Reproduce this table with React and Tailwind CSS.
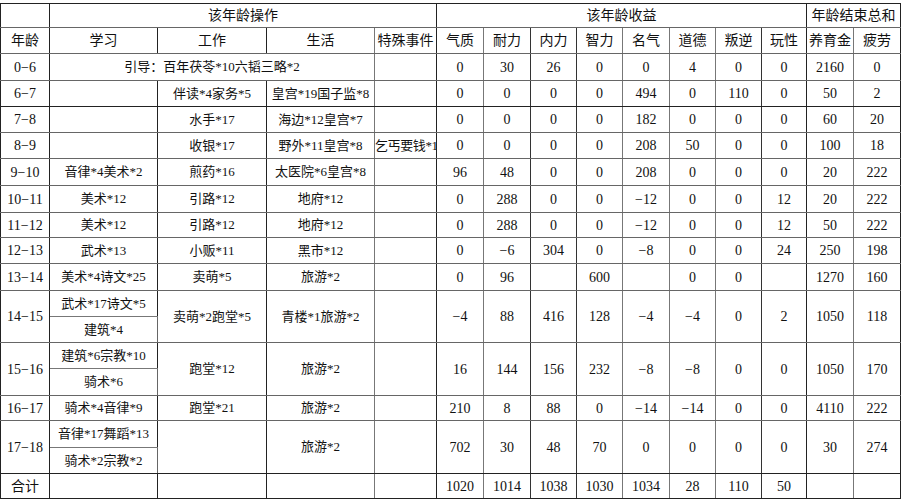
import clsx from 'clsx';

// right-hand line colour of each column (the left cell wins in a collapsed table)
const RIGHT = [
    'border-r-[#222]', 'border-r-[#222]', 'border-r-[#222]', 'border-r-[#777]', 'border-r-[#222]',
    'border-r-[#777]', 'border-r-[#333]', 'border-r-[#333]', 'border-r-[#777]', 'border-r-[#777]',
    'border-r-[#777]', 'border-r-[#333]', 'border-r-[#222]', 'border-r-[#777]', 'border-r-[#222]'
];

const widths = ['w-[49px]', 'w-[108px]', 'w-[109px]', 'w-[108px]', 'w-[62px]', 'w-[47px]', 'w-[47px]', 'w-[46px]', 'w-[46px]', 'w-[47px]', 'w-[46px]', 'w-[46px]', 'w-[45px]', 'w-[47px]', 'w-[47px]'];

const gainLabels = ['气质', '耐力', '内力', '智力', '名气', '道德', '叛逆', '玩性'];

const rows = [
    { age: '0−6', guide: '引导：百年茯苓*10六韬三略*2', nums: [0, 30, 26, 0, 0, 4, 0, 0, 2160, 0], h: 'h-[27px]' },
    { age: '6−7', study: '', work: '伴读*4家务*5', life: '皇宫*19国子监*8', nums: [0, 0, 0, 0, 494, 0, 110, 0, 50, 2], h: 'h-[26px]', dark: true },
    { age: '7−8', study: '', work: '水手*17', life: '海边*12皇宫*7', nums: [0, 0, 0, 0, 182, 0, 0, 0, 60, 20], h: 'h-[26px]' },
    { age: '8−9', study: '', work: '收银*17', life: '野外*11皇宫*8', special: '乞丐要钱*1', nums: [0, 0, 0, 0, 208, 50, 0, 0, 100, 18], h: 'h-[26px]' },
    { age: '9−10', study: '音律*4美术*2', work: '煎药*16', life: '太医院*6皇宫*8', nums: [96, 48, 0, 0, 208, 0, 0, 0, 20, 222], h: 'h-[27px]' },
    { age: '10−11', study: '美术*12', work: '引路*12', life: '地府*12', nums: [0, 288, 0, 0, '−12', 0, 0, 12, 20, 222], h: 'h-[27px]' },
    { age: '11−12', study: '美术*12', work: '引路*12', life: '地府*12', nums: [0, 288, 0, 0, '−12', 0, 0, 12, 50, 222], h: 'h-[25px]' },
    { age: '12−13', study: '武术*13', work: '小贩*11', life: '黑市*12', nums: [0, '−6', 304, 0, '−8', 0, 0, 24, 250, 198], h: 'h-[26px]' },
    { age: '13−14', study: '美术*4诗文*25', work: '卖萌*5', life: '旅游*2', nums: [0, 96, '', 600, '', 0, 0, '', 1270, 160], h: 'h-[27px]' },
    { age: '14−15', study: ['武术*17诗文*5', '建筑*4'], work: '卖萌*2跑堂*5', life: '青楼*1旅游*2', nums: ['−4', 88, 416, 128, '−4', '−4', 0, 2, 1050, 118], h: ['h-[26px]', 'h-[26px]'] },
    { age: '15−16', study: ['建筑*6宗教*10', '骑术*6'], work: '跑堂*12', life: '旅游*2', nums: [16, 144, 156, 232, '−8', '−8', 0, 0, 1050, 170], h: ['h-[26px]', 'h-[27px]'] },
    { age: '16−17', study: '骑术*4音律*9', work: '跑堂*21', life: '旅游*2', nums: [210, 8, 88, 0, '−14', '−14', 0, 0, 4110, 222], h: 'h-[25px]' },
    { age: '17−18', study: ['音律*17舞蹈*13', '骑术*2宗教*2'], work: '', life: '旅游*2', nums: [702, 30, 48, 70, 0, 0, 0, 0, 30, 274], h: ['h-[27px]', 'h-[26px]'], dark: true }
];

const Cell = ({ end, cs, rs, num, dark, children, className }) => (
    <td
        colSpan={cs}
        rowSpan={rs}
        className={clsx(
            'border border-[#666] p-0 text-center align-middle whitespace-nowrap overflow-hidden',
            RIGHT[end],
            dark && 'border-b-[#222]',
            num ? 'text-[14px]' : 'text-[13px]',
            className
        )}
    >
        {children}
    </td>
);

const NumCells = ({ nums, rs, dark }) =>
    nums.map((n, i) => (
        <Cell key={i} end={5 + i} rs={rs} num dark={dark}>
            {n}
        </Cell>
    ));

const App = () => {
    const body = [];
    rows.forEach((r, idx) => {
        if (Array.isArray(r.study)) {
            body.push(
                <tr key={idx + 'a'} className={r.h[0]}>
                    <Cell end={0} rs={2} num dark={r.dark} className="border-l-[#222]">{r.age}</Cell>
                    <Cell end={1} className="border-b-[#777]">{r.study[0]}</Cell>
                    <Cell end={2} rs={2} dark={r.dark}>{r.work}</Cell>
                    <Cell end={3} rs={2} dark={r.dark}>{r.life}</Cell>
                    <Cell end={4} rs={2} dark={r.dark}>{r.special}</Cell>
                    <NumCells nums={r.nums} rs={2} dark={r.dark} />
                </tr>,
                <tr key={idx + 'b'} className={r.h[1]}>
                    <Cell end={1} dark={r.dark}>{r.study[1]}</Cell>
                </tr>
            );
        } else if (r.guide) {
            body.push(
                <tr key={idx} className={r.h}>
                    <Cell end={0} num className="border-l-[#222]">{r.age}</Cell>
                    <Cell end={3} cs={3}>{r.guide}</Cell>
                    <Cell end={4} />
                    <NumCells nums={r.nums} />
                </tr>
            );
        } else {
            body.push(
                <tr key={idx} className={r.h}>
                    <Cell end={0} num dark={r.dark} className="border-l-[#222]">{r.age}</Cell>
                    <Cell end={1} dark={r.dark}>{r.study}</Cell>
                    <Cell end={2} dark={r.dark}>{r.work}</Cell>
                    <Cell end={3} dark={r.dark}>{r.life}</Cell>
                    <Cell end={4} dark={r.dark} className="text-[11.5px] tracking-[-0.4px]">{r.special}</Cell>
                    <NumCells nums={r.nums} dark={r.dark} />
                </tr>
            );
        }
    });

    return (
        <div className="w-[901px] h-[500px] bg-white pt-[3px] text-[#111] font-['Liberation_Serif','Noto_Sans_CJK_SC',serif] overflow-hidden">
            <table className="table-fixed border-collapse w-[900px] border border-[#222]">
                <colgroup>
                    {widths.map((w, i) => (
                        <col key={i} className={w} />
                    ))}
                </colgroup>
                <tbody>
                    <tr className="h-[24px]">
                        <Cell end={0} className="border-l-[#222] border-t-[#222]" />
                        <Cell end={4} cs={4} className="text-[14px] border-t-[#222]">该年龄操作</Cell>
                        <Cell end={12} cs={8} className="text-[14px] border-t-[#222]">该年龄收益</Cell>
                        <Cell end={14} cs={2} className="text-[14px] border-t-[#222]">年龄结束总和</Cell>
                    </tr>
                    <tr className="h-[26px]">
                        <Cell end={0} className="text-[14px] border-l-[#222]">年龄</Cell>
                        <Cell end={1} className="text-[14px]">学习</Cell>
                        <Cell end={2} className="text-[14px]">工作</Cell>
                        <Cell end={3} className="text-[14px]">生活</Cell>
                        <Cell end={4} className="text-[14px]">特殊事件</Cell>
                        {gainLabels.map((l, i) => (
                            <Cell key={l} end={5 + i} className="text-[14px]">{l}</Cell>
                        ))}
                        <Cell end={13} className="text-[14px]">养育金</Cell>
                        <Cell end={14} className="text-[14px]">疲劳</Cell>
                    </tr>
                    {body}
                    <tr className="h-[25px]">
                        <Cell end={0} className="text-[14px] border-l-[#222] border-b-[#222]">合计</Cell>
                        <Cell end={1} className="border-b-[#222]" />
                        <Cell end={2} className="border-b-[#222]" />
                        <Cell end={3} className="border-b-[#222]" />
                        <Cell end={4} className="border-b-[#222]" />
                        {[1020, 1014, 1038, 1030, 1034, 28, 110, 50, '', ''].map((n, i) => (
                            <Cell key={i} end={5 + i} num className="border-b-[#222]">{n}</Cell>
                        ))}
                    </tr>
                </tbody>
            </table>
        </div>
    );
};

export default App;
